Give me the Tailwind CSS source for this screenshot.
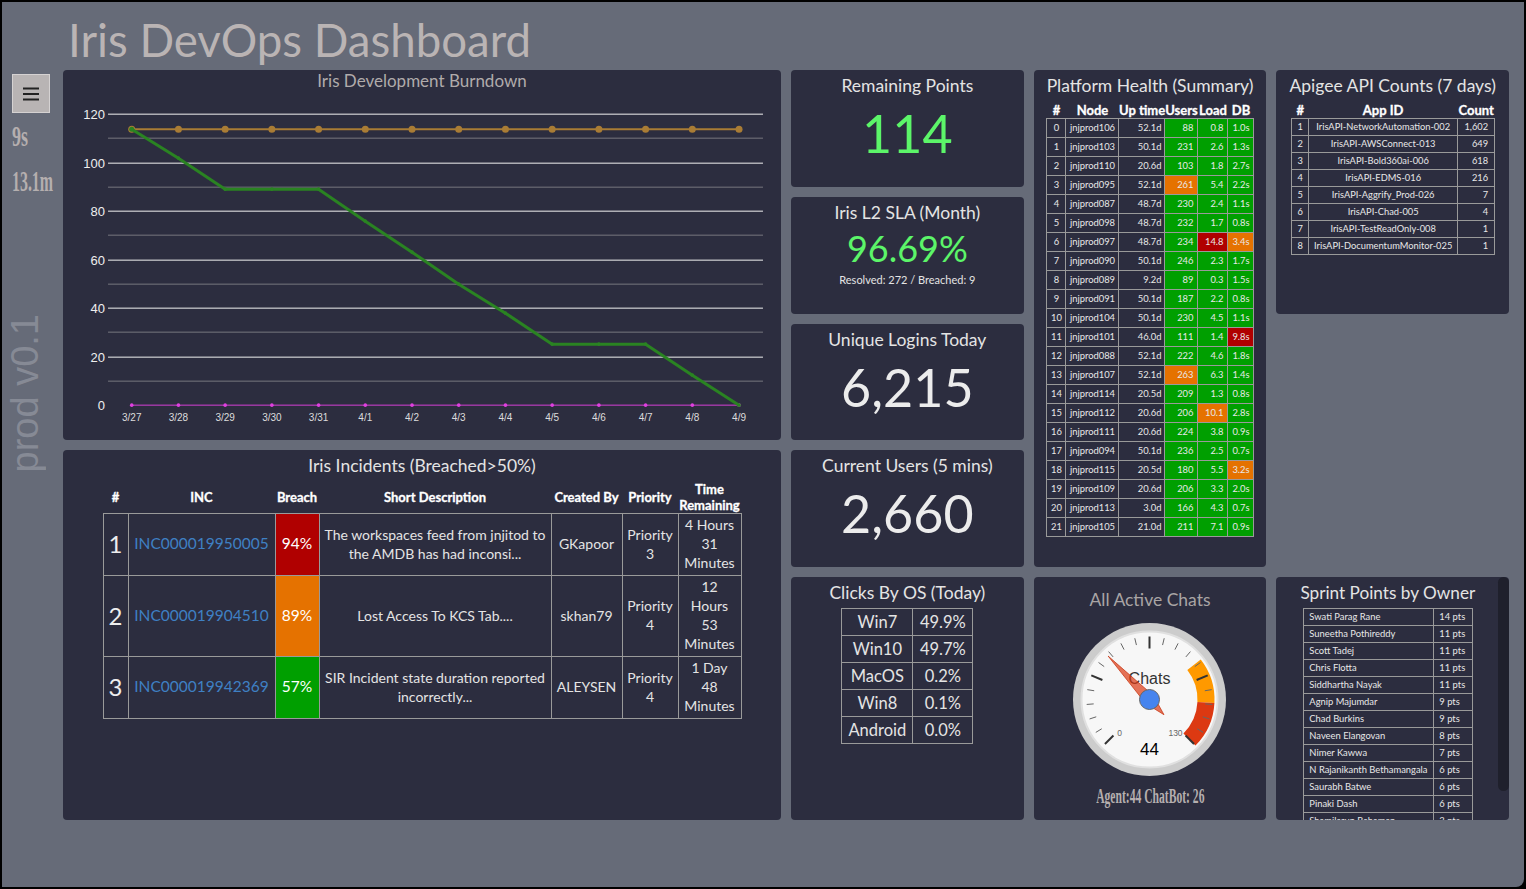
<!DOCTYPE html>
<html lang="en">
<head>
    <meta charset="UTF-8">
    <meta name="viewport" content="width=device-width, initial-scale=1.0">
    <script src="https://cdn.jsdelivr.net/npm/@tailwindcss/browser@4"></script>
    <title>Iris DevOps Dashboard</title>
</head>
<body class="bg-black h-[889px] w-[1526px] overflow-hidden font-['Lato',sans-serif]">
    <div class="absolute left-[2px] top-[2px] w-[1522px] h-[885px] bg-[#666b78] rounded-br-lg flex">
        <!-- sidebar -->
        <div class="w-[61px] shrink-0 relative flex flex-col items-start pt-[72px] pl-[10px]">
            <button class="w-[38px] h-[39px] bg-[#b8b4b4] border border-[#d5d2d2] flex items-center justify-center">
                <svg width="16" height="14" viewBox="0 0 16 14"><path d="M0 1.5h16M0 7h16M0 12.5h16" stroke="#222" stroke-width="2"/></svg>
            </button>
            <div class="mt-[8px] h-[30px] leading-[30px] text-[30px] font-bold text-[#b5afaf] font-['Liberation_Serif',serif] origin-left scale-x-[.6]">9s</div>
            <div class="mt-[15px] h-[30px] leading-[30px] text-[30px] font-bold text-[#b5afaf] font-['Liberation_Serif',serif] origin-left scale-x-[.53] whitespace-nowrap">13.1m</div>
            <div class="absolute left-[4px] top-[312px] text-[38px] leading-[38px] text-[#868a95] font-['Liberation_Sans',sans-serif] [writing-mode:vertical-rl] rotate-180 whitespace-nowrap">prod v0.1</div>
        </div>
        <!-- main -->
        <div class="flex flex-col">
            <h1 class="h-[68.33px] pl-[5px] pt-[10px] text-[45.6px] leading-[56px] text-[#bab4b4]">Iris DevOps Dashboard</h1>
            <div class="grid grid-cols-6 grid-rows-[repeat(6,116.67px)] gap-[10px] w-[1446px]">
                <div class="col-span-3 row-span-3 bg-[#2c2d3f] rounded-sm flex flex-col">
                    <div class="h-[22px] leading-[22px] text-center text-[17px] text-[#b0abab]">Iris Development Burndown</div>
                    <svg id="burndown" width="718" height="348" viewBox="63 92.33 718 348"></svg>
                </div>
                <div class="row-span-1 col-start-4 bg-[#2c2d3f] rounded-sm text-center">
                    <div class="mt-[4px] h-[24px] leading-[24px] text-[17.5px] text-[#e4e4e4]">Remaining Points</div>
                    <div class="mt-[7px] h-[56px] leading-[56px] text-[52px] text-[#5cf569]">114</div>
                </div>
                <div class="col-start-5 row-start-1 row-span-4 bg-[#2c2d3f] rounded-sm flex flex-col items-center">
                    <div class="mt-[4px] h-[24px] leading-[24px] text-[17.5px] text-[#e4e4e4]">Platform Health (Summary)</div>
                    <table id="platform" class="mt-[4px] ml-[1px] table-fixed border-collapse w-[207px] text-[9.4px] text-[#e8e8e8]">
                        <colgroup><col class="w-[19px]"><col class="w-[53px]"><col class="w-[46px]"><col class="w-[33px]"><col class="w-[30px]"><col class="w-[26px]"></colgroup>
                        <thead><tr class="h-[16px] text-[13px] leading-[12px] font-black text-white whitespace-nowrap [-webkit-text-stroke:0.3px_white]">
                            <th>#</th><th>Node</th><th>Up time</th><th>Users</th><th>Load</th><th>DB</th>
                        </tr></thead>
                        <tbody></tbody>
                    </table>
                </div>
                <div class="col-start-6 row-start-1 row-span-2 bg-[#2c2d3f] rounded-sm flex flex-col items-center">
                    <div class="mt-[4px] h-[24px] leading-[24px] text-[17.5px] text-[#e4e4e4] whitespace-nowrap">Apigee API Counts (7 days)</div>
                    <table id="apigee" class="mt-[4px] ml-[1px] table-fixed border-collapse w-[203px] text-[9.3px] text-[#e8e8e8]">
                        <colgroup><col class="w-[17px]"><col class="w-[149px]"><col class="w-[37px]"></colgroup>
                        <thead><tr class="h-[16px] text-[13px] leading-[12px] font-black text-white [-webkit-text-stroke:0.3px_white]">
                            <th>#</th><th>App ID</th><th>Count</th>
                        </tr></thead>
                        <tbody></tbody>
                    </table>
                </div>
                <div class="col-start-4 row-start-2 bg-[#2c2d3f] rounded-sm text-center">
                    <div class="mt-[4px] h-[24px] leading-[24px] text-[17.5px] text-[#e4e4e4]">Iris L2 SLA (Month)</div>
                    <div class="mt-[3px] h-[40px] leading-[40px] text-[36px] text-[#5cf569]">96.69%</div>
                    <div class="mt-[5px] h-[14px] leading-[14px] text-[11px] text-[#e4e4e4]">Resolved: 272 / Breached: 9</div>
                </div>
                <div class="col-start-4 row-start-3 bg-[#2c2d3f] rounded-sm text-center">
                    <div class="mt-[4px] h-[24px] leading-[24px] text-[17.5px] text-[#e4e4e4]">Unique Logins Today</div>
                    <div class="mt-[7px] h-[56px] leading-[56px] text-[52px] text-[#ececec]">6,215</div>
                </div>
                <div class="col-span-3 row-span-3 col-start-1 row-start-4 bg-[#2c2d3f] rounded-sm flex flex-col items-center">
                    <div class="mt-[4px] h-[24px] leading-[24px] text-[17.5px] text-[#e4e4e4]">Iris Incidents (Breached&gt;50%)</div>
                    <table id="incidents" class="mt-[3px] table-fixed border-collapse w-[638px] text-[14px] leading-[19px] text-[#e4e4e4]">
                        <colgroup><col class="w-[25px]"><col class="w-[147px]"><col class="w-[44px]"><col class="w-[232px]"><col class="w-[71px]"><col class="w-[56px]"><col class="w-[63px]"></colgroup>
                        <thead><tr class="h-[32px] text-[13px] leading-[16px] font-black text-white [-webkit-text-stroke:0.3px_white]">
                            <th>#</th><th>INC</th><th>Breach</th><th>Short Description</th><th>Created By</th><th>Priority</th><th>Time Remaining</th>
                        </tr></thead>
                        <tbody></tbody>
                    </table>
                </div>
                <div class="col-start-4 row-start-4 bg-[#2c2d3f] rounded-sm text-center">
                    <div class="mt-[4px] h-[24px] leading-[24px] text-[17.5px] text-[#e4e4e4]">Current Users (5 mins)</div>
                    <div class="mt-[7px] h-[56px] leading-[56px] text-[52px] text-[#ececec]">2,660</div>
                </div>
                <div class="col-start-4 row-start-5 row-span-2 bg-[#2c2d3f] rounded-sm flex flex-col items-center">
                    <div class="mt-[4px] h-[24px] leading-[24px] text-[17.5px] text-[#e4e4e4]">Clicks By OS (Today)</div>
                    <table id="clicks" class="mt-[3px] table-fixed border-collapse w-[131px] text-[16.5px] text-[#e4e4e4] text-center">
                        <colgroup><col class="w-[71px]"><col class="w-[60px]"></colgroup>
                        <tbody></tbody>
                    </table>
                </div>
                <div class="col-start-5 row-start-5 row-span-2 bg-[#2c2d3f] rounded-sm flex flex-col items-center">
                    <div class="mt-[11px] h-[24px] leading-[24px] text-[17.5px] text-[#a9a5a5]">All Active Chats</div>
                    <svg id="gauge" class="mt-[10px]" width="155" height="155" viewBox="-77.5 -77.5 155 155"></svg>
                    <div class="mt-[7px] h-[24px] leading-[24px] text-[20px] font-bold text-[#b5afaf] font-['Liberation_Serif',serif] scale-x-[.58] whitespace-nowrap">Agent:44 ChatBot: 26</div>
                </div>
                <div class="col-start-6 row-start-5 row-span-2 bg-[#2c2d3f] rounded-sm overflow-hidden relative flex flex-col pl-[27px]">
                    <div class="mt-[4px] -ml-[3px] h-[24px] leading-[24px] text-[17.2px] text-[#e4e4e4] w-[175px] text-center whitespace-nowrap">Sprint Points by Owner</div>
                    <table id="sprint" class="mt-[3px] table-fixed border-collapse w-[169px] text-[9.4px] text-[#e8e8e8]">
                        <colgroup><col class="w-[130px]"><col class="w-[39px]"></colgroup>
                        <tbody></tbody>
                    </table>
                    <div class="absolute right-0 top-0 h-[214px] w-[11px] bg-[#1f202c] rounded-md"></div>
                </div>
            </div>
        </div>
    </div>
    <script>
        const platform = [
            ['jnjprod106','52.1d',88,'g','0.8','g','1.0s','g'],['jnjprod103','50.1d',231,'g','2.6','g','1.3s','g'],
            ['jnjprod110','20.6d',103,'g','1.8','g','2.7s','g'],['jnjprod095','52.1d',261,'o','5.4','g','2.2s','g'],
            ['jnjprod087','48.7d',230,'g','2.4','g','1.1s','g'],['jnjprod098','48.7d',232,'g','1.7','g','0.8s','g'],
            ['jnjprod097','48.7d',234,'g','14.8','r','3.4s','o'],['jnjprod090','50.1d',246,'g','2.3','g','1.7s','g'],
            ['jnjprod089','9.2d',89,'g','0.3','g','1.5s','g'],['jnjprod091','50.1d',187,'g','2.2','g','0.8s','g'],
            ['jnjprod104','50.1d',230,'g','4.5','g','1.1s','g'],['jnjprod101','46.0d',111,'g','1.4','g','9.8s','r'],
            ['jnjprod088','52.1d',222,'g','4.6','g','1.8s','g'],['jnjprod107','52.1d',263,'o','6.3','g','1.4s','g'],
            ['jnjprod114','20.5d',209,'g','1.3','g','0.8s','g'],['jnjprod112','20.6d',206,'g','10.1','o','2.8s','g'],
            ['jnjprod111','20.6d',224,'g','3.8','g','0.9s','g'],['jnjprod094','50.1d',236,'g','2.5','g','0.7s','g'],
            ['jnjprod115','20.5d',180,'g','5.5','g','3.2s','o'],['jnjprod109','20.6d',206,'g','3.3','g','2.0s','g'],
            ['jnjprod113','3.0d',166,'g','4.3','g','0.7s','g'],['jnjprod105','21.0d',211,'g','7.1','g','0.9s','g'],
        ];
        const cell = 'border border-[#9a9a9a] p-0';
        const bg = {g: 'bg-[#009f00]', o: 'bg-[#e57200]', r: 'bg-[#b00000]'};
        document.querySelector('#platform tbody').innerHTML = platform.map((r, i) => `<tr class="h-[19px]">
            <td class="${cell} text-center">${i}</td>
            <td class="${cell} text-center">${r[0]}</td>
            <td class="${cell} text-right pr-[3px]">${r[1]}</td>
            <td class="${cell} ${bg[r[3]]} text-right pr-[4px]">${r[2]}</td>
            <td class="${cell} ${bg[r[5]]} text-right pr-[4px]">${r[4]}</td>
            <td class="${cell} ${bg[r[7]]} text-center">${r[6]}</td></tr>`).join('');

        const apigee = [['IrisAPI-NetworkAutomation-002','1,602'],['IrisAPI-AWSConnect-013','649'],['IrisAPI-Bold360ai-006','618'],['IrisAPI-EDMS-016','216'],
            ['IrisAPI-Aggrify_Prod-026','7'],['IrisAPI-Chad-005','4'],['IrisAPI-TestReadOnly-008','1'],['IrisAPI-DocumentumMonitor-025','1']];
        document.querySelector('#apigee tbody').innerHTML = apigee.map((r, i) => `<tr class="h-[17px]">
            <td class="${cell} text-center">${i + 1}</td>
            <td class="${cell} text-center whitespace-nowrap">${r[0]}</td>
            <td class="${cell} text-right pr-[6px]">${r[1]}</td></tr>`).join('');

        const sprint = [['Swati Parag Rane',14],['Suneetha Pothireddy',11],['Scott Tadej',11],['Chris Flotta',11],['Siddhartha Nayak',11],['Agnip Majumdar',9],['Chad Burkins',9],
            ['Naveen Elangovan',8],['Nimer Kawwa',7],['N Rajanikanth Bethamangala',6],['Saurabh Batwe',6],['Pinaki Dash',6],['Shamilarun Rahaman',3]];
        document.querySelector('#sprint tbody').innerHTML = sprint.map(r => `<tr class="h-[17px]">
            <td class="${cell} pl-[5px] whitespace-nowrap">${r[0]}</td>
            <td class="${cell} pl-[5px] whitespace-nowrap">${r[1]} pts</td></tr>`).join('');

        const clicks = [['Win7','49.9%'],['Win10','49.7%'],['MacOS','0.2%'],['Win8','0.1%'],['Android','0.0%']];
        document.querySelector('#clicks tbody').innerHTML = clicks.map(r => `<tr class="h-[27px]">
            <td class="${cell}">${r[0]}</td><td class="${cell}">${r[1]}</td></tr>`).join('');

        const incidents = [
            [1,'INC000019950005','94%','r','The workspaces feed from jnjitod to<br>the AMDB has had inconsi...','GKapoor','Priority 3','4 Hours 31 Minutes','h-[62px]'],
            [2,'INC000019904510','89%','o','Lost Access To KCS Tab....','skhan79','Priority 4','12 Hours 53 Minutes','h-[81px]'],
            [3,'INC000019942369','57%','g','SIR Incident state duration reported<br>incorrectly...','ALEYSEN','Priority 4','1 Day 48 Minutes','h-[62px]'],
        ];
        document.querySelector('#incidents tbody').innerHTML = incidents.map(r => `<tr class="${r[8]}">
            <td class="${cell} pb-[2px] text-center text-[24px] text-[#eee]">${r[0]}</td>
            <td class="${cell} pb-[2px] text-center text-[15.5px] text-[#3f80c4]">${r[1]}</td>
            <td class="${cell} pb-[2px] ${bg[r[3]]} text-center text-[15.5px] text-white">${r[2]}</td>
            <td class="${cell} pb-[2px] text-center whitespace-nowrap">${r[4]}</td>
            <td class="${cell} pb-[2px] text-center">${r[5]}</td>
            <td class="${cell} pb-[2px] text-center px-[4px]">${r[6]}</td>
            <td class="${cell} pb-[2px] text-center px-[5px]">${r[7]}</td></tr>`).join('');

        // burndown chart, drawn in page coordinates
        const xAt = i => 131.7 + i * 46.72;
        const yAt = v => Math.round(405 - v * 2.425) + 0.5;
        const labels = ['3/27','3/28','3/29','3/30','3/31','4/1','4/2','4/3','4/4','4/5','4/6','4/7','4/8','4/9'];
        const burn = [114,102,89,89,89,76,63,50,38,25,25,25,12.5,0];
        let s = '';
        for (let v = 10; v <= 120; v += 10) {
            const major = v % 20 === 0;
            s += `<line x1="108" x2="763" y1="${yAt(v)}" y2="${yAt(v)}" stroke="${major ? '#f2f2f2' : '#77777f'}" stroke-width="1"/>`;
        }
        [0,20,40,60,80,100,120].forEach(v => {
            s += `<text x="105" y="${yAt(v) + 4.5}" text-anchor="end" font-family="Liberation Sans" font-size="13" fill="#eee">${v}</text>`;
        });
        const pts = a => a.map((v, i) => `${xAt(i)},${yAt(v)}`).join(' ');
        s += `<polyline points="${pts(labels.map(() => 0))}" fill="none" stroke="#d63fd6" stroke-width="1"/>`;
        s += `<polyline points="${pts(labels.map(() => 114))}" fill="none" stroke="#a97c35" stroke-width="2"/>`;
        labels.forEach((l, i) => {
            s += `<circle cx="${xAt(i)}" cy="${yAt(114)}" r="3.5" fill="#a97c35"/>`;
            s += `<circle cx="${xAt(i)}" cy="${yAt(0)}" r="1.8" fill="#e040e0"/>`;
            s += `<text x="${xAt(i)}" y="421" text-anchor="middle" font-family="Liberation Sans" font-size="10" fill="#ddd">${l}</text>`;
        });
        s += `<polyline points="${pts(burn)}" fill="none" stroke="#2a8322" stroke-width="3"/>`;
        burn.forEach((v, i) => { s += `<circle cx="${xAt(i)}" cy="${yAt(v)}" r="${i === 0 ? 2.5 : 1.8}" fill="#2a8322"/>`; });
        document.getElementById('burndown').innerHTML = s;

        // gauge
        const polar = (r, deg) => { const a = deg * Math.PI / 180; return [r * Math.sin(a), -r * Math.cos(a)]; };
        const band = (from, to, color) => {
            const [a, b] = polar(65, from), [c, d] = polar(65, to), [e, f] = polar(48, to), [g, h] = polar(48, from);
            return `<path d="M${a} ${b}A65 65 0 0 1 ${c} ${d}L${e} ${f}A48 48 0 0 0 ${g} ${h}Z" fill="${color}"/>`;
        };
        let g = '<circle r="76.5" fill="#cccccc"/><circle r="68" fill="#f7f7f7" stroke="#e0e0e0" stroke-width="2"/>';
        g += band(52, 93, '#ff9900') + band(93, 135, '#dc3912');
        for (let i = 0; i <= 20; i++) {
            const deg = -135 + i * 13.5, major = i % 5 === 0;
            const [x1, y1] = polar(major ? 51 : 56, deg), [x2, y2] = polar(63, deg);
            g += `<line x1="${x1}" y1="${y1}" x2="${x2}" y2="${y2}" stroke="${major ? '#333' : '#666'}" stroke-width="${major ? 2 : 1}"/>`;
        }
        g += '<text x="-30" y="36" text-anchor="middle" font-family="Liberation Sans" font-size="8.5" fill="#666">0</text>';
        g += '<text x="26" y="36" text-anchor="middle" font-family="Liberation Sans" font-size="8.5" fill="#666">130</text>';
        g += '<text x="0" y="-15.5" text-anchor="middle" font-family="Liberation Sans" font-size="16" fill="#333">Chats</text>';
        g += '<text x="0" y="55" text-anchor="middle" font-family="Liberation Sans" font-size="17" fill="#000">44</text>';
        g += '<polygon points="0,-60 5.5,0 0,21 -5.5,0" transform="rotate(-43.6)" fill="#dc3912" fill-opacity="0.7" stroke="#c63310" stroke-width="0.7"/>';
        g += '<circle r="10" fill="#4684ee" stroke="#666" stroke-width="1"/>';
        document.getElementById('gauge').innerHTML = g;
    </script>
</body>
</html>
